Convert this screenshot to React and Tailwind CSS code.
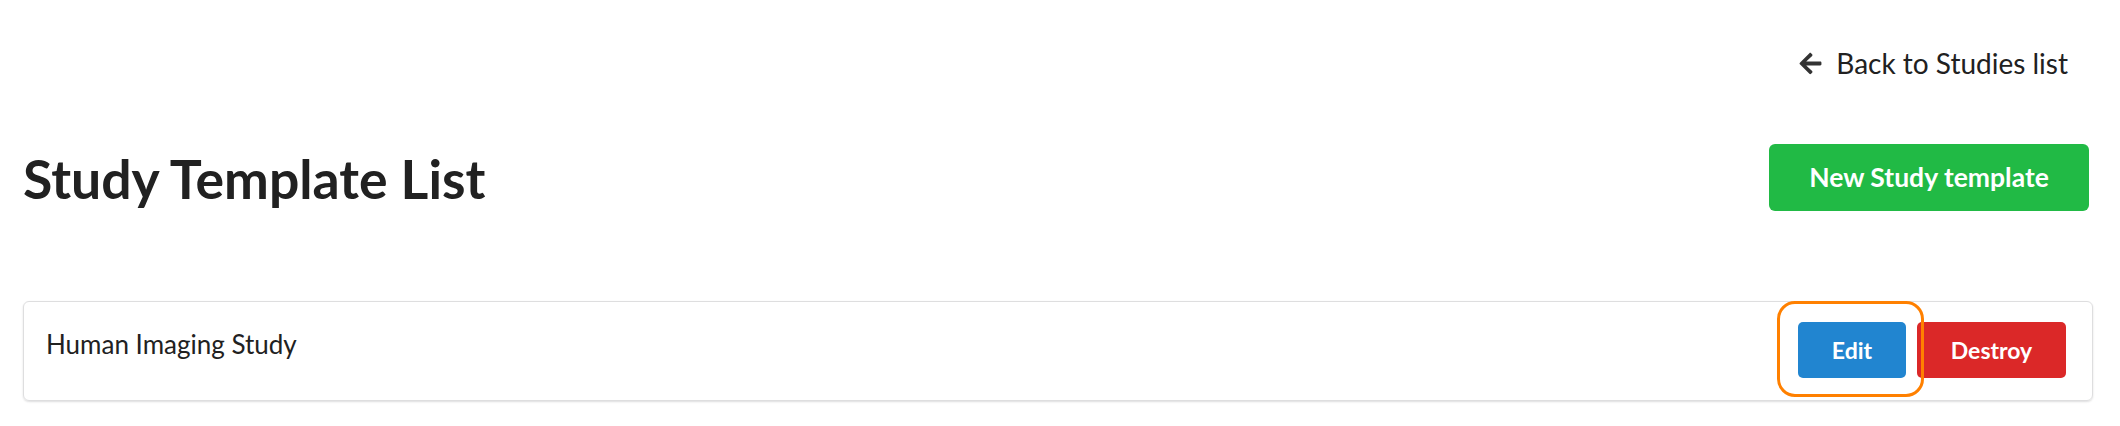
import { FaArrowLeft } from "react-icons/fa";

export default function App() {
  return (
    <div className="w-[2120px] h-[426px] bg-white font-['Lato',sans-serif] text-[#212121] pl-[23px] pr-[27px]">
      <div className="flex justify-end pt-[48px] pr-[25px]">
        <a href="#" className="flex items-center gap-[13px] text-[28px] leading-[31px] text-[#212121]">
          <FaArrowLeft className="text-[#333333] w-[25px] h-[25px]" />
          <span>Back to Studies list</span>
        </a>
      </div>

      <div className="flex items-center justify-between mt-[65px] h-[67px]">
        <h1 className="text-[53.5px] leading-[64px] font-bold">Study Template List</h1>
        <button className="mr-[4px] w-[320px] h-[67px] rounded-[6px] bg-[#21ba45] text-white text-[26.5px] font-bold">
          New Study template
        </button>
      </div>

      <div className="mt-[90px] h-[100px] rounded-[6px] border border-[#dededf] shadow-[0_1px_2px_0_rgba(34,36,38,0.15)] flex items-start justify-between pl-[22px] pr-[26px] pt-[20px]">
        <div className="pt-[7px] text-[26px] leading-[30px]">Human Imaging Study</div>
        <div className="flex gap-[11px]">
          <span className="relative">
            <button className="h-[56px] w-[108px] rounded-[5px] bg-[#2185d0] text-white text-[23px] font-bold">
              Edit
            </button>
            <span className="absolute -left-[21px] -right-[18px] -top-[21px] -bottom-[19px] rounded-[18px] border-[3px] border-[#ff8000]" />
          </span>
          <button className="h-[56px] w-[149px] rounded-[5px] bg-[#db2828] text-white text-[23px] font-bold">
            Destroy
          </button>
        </div>
      </div>
    </div>
  );
}
